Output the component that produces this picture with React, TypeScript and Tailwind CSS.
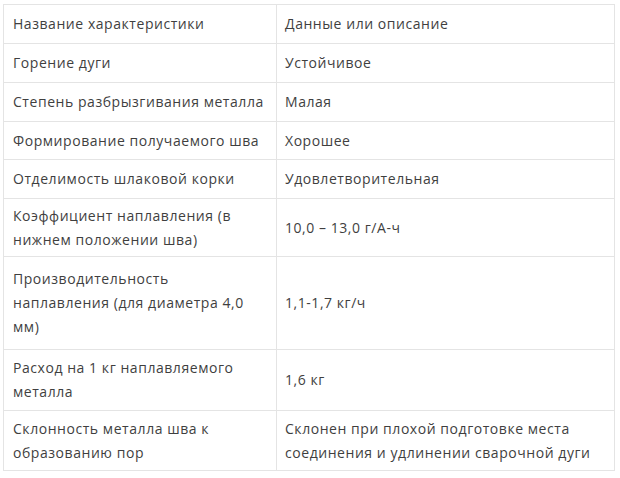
import { Fragment } from "react"

interface Row {
  name: string[]
  value: string[]
  h: string
}

const rows: Row[] = [
  { name: ["Название характеристики"], value: ["Данные или описание"], h: "h-[39px]" },
  { name: ["Горение дуги"], value: ["Устойчивое"], h: "h-[39px]" },
  { name: ["Степень разбрызгивания металла"], value: ["Малая"], h: "h-[39px]" },
  { name: ["Формирование получаемого шва"], value: ["Хорошее"], h: "h-[38px]" },
  { name: ["Отделимость шлаковой корки"], value: ["Удовлетворительная"], h: "h-[39px]" },
  {
    name: ["Коэффициент наплавления (в", "нижнем положении шва)"],
    value: ["10,0 – 13,0 г/А-ч"],
    h: "h-[58px]",
  },
  {
    name: ["Производительность", "наплавления (для диаметра 4,0", "мм)"],
    value: ["1,1-1,7 кг/ч"],
    h: "h-[93px]",
  },
  {
    name: ["Расход на 1 кг наплавляемого", "металла"],
    value: ["1,6 кг"],
    h: "h-[61px]",
  },
  {
    name: ["Склонность металла шва к", "образованию пор"],
    value: ["Склонен при плохой подготовке места", "соединения и удлинении сварочной дуги"],
    h: "h-[60px]",
  },
]

function Lines({ lines }: { lines: string[] }) {
  return (
    <>
      {lines.map((l, i) => (
        <Fragment key={i}>
          {i > 0 && <br />}
          {l}
        </Fragment>
      ))}
    </>
  )
}

export default function App() {
  return (
    <div className="min-h-[478px] bg-white pl-[3px] pt-[4px]">
      <table
        className="w-[612px] border-collapse text-[14px] leading-[24px] tracking-[0.55px] text-[#3f3f3f]"
        style={{ fontFamily: '"Open Sans", "Noto Sans", sans-serif' }}
      >
        <colgroup>
          <col className="w-[273px]" />
          <col />
        </colgroup>
        <tbody>
          {rows.map((row, i) => (
            <tr key={i} className={row.h}>
              <td className="whitespace-nowrap border border-[#e4e4e4] py-0 pl-[9px] pr-2 align-middle">
                <Lines lines={row.name} />
              </td>
              <td className="whitespace-nowrap border border-[#e4e4e4] py-0 pl-[8px] pr-2 align-middle">
                <Lines lines={row.value} />
              </td>
            </tr>
          ))}
        </tbody>
      </table>
    </div>
  )
}
